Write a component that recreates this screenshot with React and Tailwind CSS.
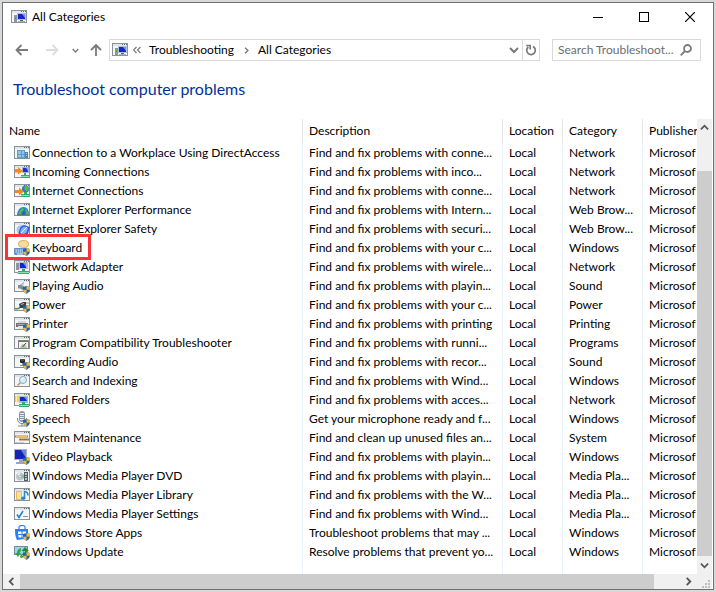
const rows = [
    { icon: 'building', name: 'Connection to a Workplace Using DirectAccess', description: 'Find and fix problems with conne...', category: 'Network' },
    { icon: 'incoming', name: 'Incoming Connections', description: 'Find and fix problems with inco...', category: 'Network' },
    { icon: 'internet', name: 'Internet Connections', description: 'Find and fix problems with conne...', category: 'Network' },
    { icon: 'performance', name: 'Internet Explorer Performance', description: 'Find and fix problems with Intern...', category: 'Web Brow...' },
    { icon: 'safety', name: 'Internet Explorer Safety', description: 'Find and fix problems with securi...', category: 'Web Brow...' },
    { icon: 'keyboard', name: 'Keyboard', description: 'Find and fix problems with your c...', category: 'Windows', highlighted: true },
    { icon: 'network', name: 'Network Adapter', description: 'Find and fix problems with wirele...', category: 'Network' },
    { icon: 'audio', name: 'Playing Audio', description: 'Find and fix problems with playin...', category: 'Sound' },
    { icon: 'power', name: 'Power', description: 'Find and fix problems with your c...', category: 'Power' },
    { icon: 'printer', name: 'Printer', description: 'Find and fix problems with printing', category: 'Printing' },
    { icon: 'program', name: 'Program Compatibility Troubleshooter', description: 'Find and fix problems with runni...', category: 'Programs' },
    { icon: 'recording', name: 'Recording Audio', description: 'Find and fix problems with recor...', category: 'Sound' },
    { icon: 'search', name: 'Search and Indexing', description: 'Find and fix problems with Wind...', category: 'Windows' },
    { icon: 'shared', name: 'Shared Folders', description: 'Find and fix problems with acces...', category: 'Network' },
    { icon: 'speech', name: 'Speech', description: 'Get your microphone ready and f...', category: 'Windows' },
    { icon: 'maintenance', name: 'System Maintenance', description: 'Find and clean up unused files an...', category: 'System' },
    { icon: 'video', name: 'Video Playback', description: 'Find and fix problems with playin...', category: 'Windows' },
    { icon: 'dvd', name: 'Windows Media Player DVD', description: 'Find and fix problems with playin...', category: 'Media Pla...' },
    { icon: 'library', name: 'Windows Media Player Library', description: 'Find and fix problems with the W...', category: 'Media Pla...' },
    { icon: 'settings', name: 'Windows Media Player Settings', description: 'Find and fix problems with Wind...', category: 'Media Pla...' },
    { icon: 'store', name: 'Windows Store Apps', description: 'Troubleshoot problems that may ...', category: 'Windows' },
    { icon: 'update', name: 'Windows Update', description: 'Resolve problems that prevent yo...', category: 'Windows' },
];

// Small window frame that most of the icons sit in
function Frame() {
    return (
        <g shapeRendering="crispEdges">
            <rect x="0" y="1" width="16" height="13" fill="#8b9298" />
            <rect x="1" y="2" width="14" height="2" fill="#dfe5ea" />
            <rect x="1" y="4" width="14" height="9" fill="#f3f5f6" />
            <rect x="10" y="2" width="1" height="1" fill="#5c6b7a" />
            <rect x="12" y="2" width="1" height="1" fill="#5c6b7a" />
            <rect x="14" y="2" width="1" height="1" fill="#5c6b7a" />
        </g>
    );
}

function Shield() {
    return (
        <g>
            <path d="M12.5 8 L16 9 V11.8 Q15.6 14.6 12.5 16 Q9.4 14.6 9 11.8 V9Z" fill="#1d66b4" />
            <path d="M12.5 8 L16 9 V11.8 H12.5Z" fill="#f3b92e" />
            <path d="M12.5 16 Q9.4 14.6 9 11.8 H12.5Z" fill="#f3b92e" />
        </g>
    );
}

function Monitor({ x = 6, y = 4 }) {
    return (
        <g>
            <rect x={x} y={y} width="9" height="7" fill="#b9c3d0" />
            <rect x={x + 1} y={y + 1} width="7" height="5" fill="#1526c9" />
            <path d={`M${x + 5} ${y + 1} h3 v4z`} fill="#6e95f2" />
            <rect x={x + 3} y={y + 7} width="3" height="1" fill="#59636f" />
            <rect x={x + 1} y={y + 8} width="7" height="1" fill="#a7b0bb" />
        </g>
    );
}

const glyphs = {
    troubleshoot: (
        <>
            <Frame />
            <Monitor x={6} y={4} />
            <rect x="3" y="6" width="3" height="7" fill="#8e98a2" />
            <rect x="4" y="8" width="1" height="2" fill="#28c229" />
        </>
    ),
    building: (
        <>
            <Frame />
            <rect x="3" y="5" width="8" height="8" fill="#5b9fc6" />
            <path d="M4 6h3v3H4zM8 6h2v3H8zM4 10h3v2H4zM8 10h2v2H8z" fill="#8cc8e8" />
            <rect x="11" y="7" width="3" height="6" fill="#4785ad" />
            <path d="M12 8h1v1h-1zM12 10h1v1h-1z" fill="#9cd1ea" />
        </>
    ),
    incoming: (
        <>
            <Frame />
            <rect x="8" y="3" width="7" height="6" fill="#aab6c6" />
            <rect x="9" y="4" width="5" height="4" fill="#1c2fd0" />
            <path d="M12 4h2v3z" fill="#7d9ff3" />
            <path d="M10 9h2v2h3v3H7v-3h3z" fill="#28b268" />
            <path d="M7 12.500h8" stroke="#86e0ae" />
            <path d="M1 5h3V3l5 4-5 3.500V8.500H1z" fill="#f28a20" />
        </>
    ),
    internet: (
        <>
            <Frame />
            <circle cx="11.500" cy="6" r="3.600" fill="#3476cc" />
            <path d="M10 4l3-1.500 2 3-2 3-2-1z" fill="#55b848" />
            <path d="M10 9h3v2h2v3H7v-3h3z" fill="#2eae68" />
            <path d="M7 12.500h8" stroke="#86e0ae" />
            <path d="M1 7h4V4.500l5 4-5 4V10H1z" fill="#f28a20" />
        </>
    ),
    performance: (
        <>
            <Frame />
            <path d="M3 13Q4 5 9.500 5t5.500 8z" fill="#2d86bd" />
            <path d="M4.500 12Q5.500 7 9 6l1 2-3 2v3z" fill="#5bb95a" />
            <path d="M11 6q3 2 3.500 7H12q1-3-1-7z" fill="#5bb95a" />
            <path d="M8 13l2-5 1 5z" fill="#2358ae" />
            <path d="M3 13h12" stroke="#547082" />
        </>
    ),
    safety: (
        <>
            <Frame />
            <path d="M2.500 9q0-5 6-5 3 0 4 1l-4 9H5q-2-2-2.500-5z" fill="#a9c6ef" />
            <path d="M10 4L16 6l-2 7-6 3-3.500-4 2-6z" fill="#2f62d6" />
            <path d="M10 5.500l4 1.500-1.500 4.500-4 2.500L6 11.500l1.500-4z" fill="#86aef4" />
            <path d="M7 12l6-6" stroke="#e4eeff" />
        </>
    ),
    keyboard: (
        <>
            <path d="M4 4q0-4 5.500-4T15 4q0 3.500-3.500 4L9 10V8Q4 7.500 4 4z" fill="#dcb569" />
            <path d="M5 4Q5 1 9.500 1T14 4q0 2.500-3 3L9.500 8V7Q5 7 5 4z" fill="#f5dba0" />
            <rect x="0" y="8" width="12" height="7" rx="1" fill="#5f92c9" />
            <path d="M1.500 10h9M1.500 12h9" stroke="#e4f1fc" strokeDasharray="1.500 .7" />
            <path d="M3 14h6" stroke="#e4f1fc" />
            <Shield />
        </>
    ),
    network: (
        <>
            <Frame />
            <rect x="2" y="4" width="3" height="7" fill="#8e98a2" />
            <rect x="3" y="6" width="1" height="1" fill="#28c229" />
            <rect x="5" y="3" width="9" height="7" fill="#b0bccb" />
            <rect x="6" y="4" width="6" height="5" fill="#1526c9" />
            <path d="M9 4h3v4z" fill="#6e95f2" />
            <path d="M8 10h3v2h4v3H4v-3h4z" fill="#2aaf72" />
            <path d="M4 13.500h11" stroke="#8be3b6" />
        </>
    ),
    audio: (
        <>
            <Frame />
            <path d="M4 7h2l4-3v9L6 10.500H4z" fill="#848b91" />
            <path d="M7 7l3-2.500v4z" fill="#d1d5d8" />
            <Shield />
        </>
    ),
    power: (
        <>
            <Frame />
            <path d="M1 11.500q4 1 5-1.500" stroke="#45914c" strokeWidth="1.500" fill="none" />
            <path d="M5 7l4-2h3v4l-2 2H6z" fill="#3c4143" />
            <path d="M7 7.500l3-1" stroke="#b7bec1" />
            <path d="M12 6h3" stroke="#b9933c" />
            <Shield />
        </>
    ),
    printer: (
        <>
            <Frame />
            <rect x="4" y="5" width="8" height="3" fill="#d5d9db" />
            <rect x="2" y="7" width="12" height="4" fill="#6b7174" />
            <path d="M3 8.500h10" stroke="#a5abad" />
            <rect x="4" y="10" width="5" height="3" fill="#e4e7e8" />
            <Shield />
        </>
    ),
    program: (
        <>
            <Frame />
            <rect x="4" y="5" width="11" height="9" fill="#7d8286" />
            <rect x="5" y="6" width="9" height="1" fill="#dd4a3b" />
            <rect x="5" y="7" width="9" height="6" fill="#f5f3e9" />
            <path d="M6 13q1-4 3.500-4T13 13z" fill="#b9c9b0" />
            <path d="M8.500 12l3.500-4" stroke="#3f4447" />
        </>
    ),
    recording: (
        <>
            <Frame />
            <rect x="6" y="5" width="5" height="4" rx="1" fill="#27292b" />
            <path d="M7 6h3" stroke="#686e72" />
            <path d="M8 9h1v2H8zM6 11h4v1H6z" fill="#8b9195" />
            <Shield />
        </>
    ),
    search: (
        <>
            <Frame />
            <path d="M6.500 9.500L3.500 12.500" stroke="#c09a62" strokeWidth="1.600" />
            <circle cx="9" cy="7" r="3.500" fill="#d4edfc" stroke="#91a7b7" />
            <path d="M7 6.500q1-2 3-1.500" stroke="#fff" fill="none" />
        </>
    ),
    shared: (
        <>
            <Frame />
            <path d="M1 4h4v6H1z" fill="#efd165" />
            <path d="M2 4h1v6H2z" fill="#fff0a9" />
            <rect x="5" y="4" width="9" height="7" fill="#b0bccb" />
            <rect x="6" y="5" width="7" height="4" fill="#1526c9" />
            <path d="M10 5h3v4z" fill="#6e95f2" />
            <path d="M8 10h3v2h4v3H5v-3h3z" fill="#2aaf72" />
            <path d="M5 13.500h10" stroke="#8be3b6" />
        </>
    ),
    speech: (
        <>
            <rect x="5" y="0" width="6" height="11" rx="3" fill="#8999ac" />
            <path d="M6 2.500h4M6 4.500h4M6 6.500h4M6 8.500h4" stroke="#e4ebf2" />
            <path d="M3.500 7q0 5.500 4.500 5.500T12.500 7M8 12v3M4 15h7" stroke="#7485a0" fill="none" />
            <Shield />
        </>
    ),
    maintenance: (
        <>
            <Frame />
            <path d="M1 6.500h13M5 9.500h10" stroke="#b0822f" strokeWidth="2" />
            <path d="M2 6.500h11" stroke="#e9c26a" />
            <path d="M6 9.500h8" stroke="#8a6420" strokeDasharray="1 1" />
            <path d="M1 12.500h9" stroke="#c9ced2" />
        </>
    ),
    video: (
        <>
            <path d="M0 0h13v11H0z" fill="#a8b2c4" />
            <path d="M1 1h11v9H1z" fill="#1423b9" />
            <path d="M7 1h5v8z" fill="#6485e8" />
            <path d="M5 11h4v2H5zM2 13h9v2H2z" fill="#9ca7b4" />
            <Shield />
        </>
    ),
    dvd: (
        <>
            <Frame />
            <circle cx="6" cy="8.500" r="4" fill="#bfc5c9" />
            <path d="M6 8.500l4-2v4z" fill="#74c885" />
            <path d="M6 8.500L3 6l3-1.300z" fill="#eef1f2" />
            <circle cx="6" cy="8.500" r="1.200" fill="#fff" stroke="#81898e" strokeWidth=".5" />
            <rect x="10" y="4" width="4" height="9" fill="#535c66" />
            <path d="M11 5h2v2h-2zM11 8h2v1h-2zM11 10h2v2h-2z" fill="#a9cbe2" />
        </>
    ),
    library: (
        <>
            <Frame />
            <rect x="2" y="4" width="6" height="9" fill="#e6bd57" />
            <rect x="3" y="5" width="4" height="7" fill="#f9e39c" />
            <path d="M10.500 11V4.500q3.500.5 3.500 4" stroke="#258ad9" strokeWidth="1.600" fill="none" />
            <ellipse cx="9.200" cy="11.300" rx="2.200" ry="1.700" fill="#258ad9" />
        </>
    ),
    settings: (
        <>
            <Frame />
            <path d="M3 8.500l2 3L9 5" stroke="#2480c7" strokeWidth="1.600" fill="none" />
            <path d="M9 10.500h5" stroke="#8b9298" />
        </>
    ),
    store: (
        <>
            <path d="M5 4V2q0-1.500 3-1.500T11 2v2" stroke="#2a7ff0" strokeWidth="1.200" fill="none" />
            <path d="M1 4h13v9.500L3 15q-2-3-2-11z" fill="#2a7ff0" />
            <path d="M4 6.500h3.500v2.500H4zM8.500 6.500H12v2.500H8.500zM4.200 10h3.300v2.500H4.600zM8.500 10H12v2.500H8.500z" fill="#fff" />
            <Shield />
        </>
    ),
    update: (
        <>
            <path d="M0 2h14v9H0z" fill="#6f8d9e" />
            <path d="M1 3h12v7H1z" fill="#9ed6ef" />
            <path d="M4 13L1 9h2q0-4 4-5 0 4-1.500 5H7z" fill="#30a44b" />
            <path d="M11 3l4 4h-2q-1 6-6 7-1-1-1-2 3-1 3.500-5H7.500z" fill="#238a3b" />
            <path d="M10.500 7q0 4-3 5.500" stroke="#8fdc8f" fill="none" />
            <Shield />
        </>
    ),
};

function ItemIcon({ name }) {
    return (
        <svg viewBox="0 0 16 16" className="size-4 shrink-0" aria-hidden="true">
            {glyphs[name]}
        </svg>
    );
}

function Chevron({ d, className }) {
    return (
        <svg viewBox="0 0 10 10" className={className} fill="none" stroke="currentColor" strokeWidth="2" aria-hidden="true">
            <path d={d} />
        </svg>
    );
}

function TitleBar() {
    return (
        <header className="flex h-7 items-center justify-between pl-2">
            <div className="flex items-center gap-[5px]">
                <ItemIcon name="troubleshoot" />
                <h1>All Categories</h1>
            </div>
            <div className="flex h-full text-black">
                <button type="button" aria-label="Minimize" className="flex w-[46px] items-center justify-center">
                    <svg viewBox="0 0 10 10" className="size-[10px]" stroke="currentColor">
                        <path d="M0 5.500h10" />
                    </svg>
                </button>
                <button type="button" aria-label="Maximize" className="flex w-[46px] items-center justify-center">
                    <svg viewBox="0 0 10 10" className="size-[10px]" fill="none" stroke="currentColor">
                        <rect x=".5" y=".5" width="9" height="9" />
                    </svg>
                </button>
                <button type="button" aria-label="Close" className="flex w-[46px] items-center justify-center">
                    <svg viewBox="0 0 10 10" className="size-[10px]" stroke="currentColor" strokeWidth="1.200">
                        <path d="M0 0l10 10M10 0L0 10" />
                    </svg>
                </button>
            </div>
        </header>
    );
}

function AddressBar() {
    return (
        <div className="mt-2 flex h-[22px] items-stretch px-3 text-[#7a7a7a]">
            <nav aria-label="History" className="flex w-[94px] items-center">
                <button type="button" aria-label="Back" className="flex w-[14px] justify-center">
                    <svg viewBox="0 0 14 12" className="h-3 w-[14px]" fill="none" stroke="currentColor" strokeWidth="1.800">
                        <path d="M13 6H2M6.500 1L1.500 6l5 5" />
                    </svg>
                </button>
                <button type="button" aria-label="Forward" className="ml-4 flex w-[14px] justify-center text-[#dcdcdc]">
                    <svg viewBox="0 0 14 12" className="h-3 w-[14px]" fill="none" stroke="currentColor" strokeWidth="1.800">
                        <path d="M1 6h11M7.500 1l5 5-5 5" />
                    </svg>
                </button>
                <button type="button" aria-label="Recent locations" className="ml-3 flex w-2 justify-center">
                    <Chevron d="M1 3l4 4 4-4" className="size-[7px]" />
                </button>
                <button type="button" aria-label="Up" className="ml-[11px] flex w-3 justify-center">
                    <svg viewBox="0 0 12 12" className="size-3" fill="none" stroke="currentColor" strokeWidth="1.800">
                        <path d="M6 12V1.500M1 6l5-5 5 5" />
                    </svg>
                </button>
            </nav>

            <div className="flex min-w-0 flex-1 items-center border border-[#d9d9d9] pl-0.5">
                <ItemIcon name="troubleshoot" />
                <svg viewBox="0 0 8 8" className="ml-[5px] size-2 shrink-0" fill="none" stroke="currentColor" strokeWidth="1.200" aria-hidden="true">
                    <path d="M3.500 1l-3 3 3 3M7.500 1l-3 3 3 3" />
                </svg>
                <a href="#troubleshooting" className="ml-2 whitespace-nowrap text-black">Troubleshooting</a>
                <Chevron d="M3 1l4 4-4 4" className="mr-2 ml-[9px] size-[7px] shrink-0" />
                <a href="#all" className="whitespace-nowrap text-black">All Categories</a>
                <button type="button" aria-label="Previous locations" className="mr-[3px] ml-auto">
                    <Chevron d="M1 3l4 4 4-4" className="size-[10px]" />
                </button>
                <button type="button" aria-label="Refresh" className="flex w-[17px] items-center justify-center self-stretch border-l border-[#d9d9d9]">
                    <svg viewBox="0 0 12 12" className="size-3" fill="none" stroke="currentColor" strokeWidth="1.700" aria-hidden="true">
                        <path d="M8 2.500A4.300 4.300 0 1 1 3.300 3M1.200 1.500h4v4" />
                    </svg>
                </button>
            </div>

            <label className="ml-3 flex w-[149px] items-center border border-[#d9d9d9] pr-2 pl-[5px]">
                <input
                    type="text"
                    aria-label="Search Troubleshooting"
                    placeholder="Search Troubleshoot..."
                    className="min-w-0 flex-1 outline-none placeholder:text-[#6d6d6d]"
                />
                <svg viewBox="0 0 12 12" className="size-3 shrink-0" fill="none" stroke="currentColor" strokeWidth="1.800" aria-hidden="true">
                    <circle cx="7.500" cy="4.500" r="3.500" />
                    <path d="M5 7L.7 11.300" />
                </svg>
            </label>
        </div>
    );
}

function CategoryTable() {
    return (
        <table className="w-full table-fixed border-separate border-spacing-0 text-left whitespace-nowrap text-black">
            <colgroup>
                <col className="w-[300px]" />
                <col />
                <col className="w-[60px]" />
                <col className="w-20" />
                <col className="w-[54px]" />
            </colgroup>
            <thead>
                <tr className="h-6">
                    <th scope="col" className="border-r border-[#e5e5e5] p-0 pl-1.5 font-normal">Name</th>
                    <th scope="col" className="border-r border-[#e5e5e5] p-0 pl-1.5 font-normal">Description</th>
                    <th scope="col" className="border-r border-[#e5e5e5] p-0 pl-1.5 font-normal">Location</th>
                    <th scope="col" className="border-r border-[#e5e5e5] p-0 pl-1.5 font-normal">Category</th>
                    <th scope="col" className="overflow-hidden p-0 pl-1.5 font-normal">Publisher</th>
                </tr>
            </thead>
            <tbody>
                {rows.map((row) => (
                    <tr key={row.name} className="h-[19px]">
                        <td className="border-r border-[#e9f1fb] p-0 pl-[11px]">
                            <div className="relative flex items-center gap-0.5">
                                <ItemIcon name={row.icon} />
                                <span>{row.name}</span>
                                {row.highlighted && (
                                    <div className="pointer-events-none absolute -top-1.5 -left-[9px] h-[26px] w-[86px] border-3 border-[#fa3338]" />
                                )}
                            </div>
                        </td>
                        <td className="overflow-hidden border-r border-[#e9f1fb] p-0 pl-1.5">{row.description}</td>
                        <td className="overflow-hidden border-r border-[#e9f1fb] p-0 pl-1.5">Local</td>
                        <td className="overflow-hidden border-r border-[#e9f1fb] p-0 pl-1.5">{row.category}</td>
                        <td className="overflow-hidden p-0 pl-1.5">Microsof</td>
                    </tr>
                ))}
                <tr className="h-[13px]" aria-hidden="true">
                    <td className="border-r border-[#e9f1fb]" />
                    <td className="border-r border-[#e9f1fb]" />
                    <td className="border-r border-[#e9f1fb]" />
                    <td className="border-r border-[#e9f1fb]" />
                    <td />
                </tr>
            </tbody>
        </table>
    );
}

function VerticalScrollbar() {
    return (
        <div className="flex w-[15px] shrink-0 flex-col bg-[#f0f0f0] text-[#555]">
            <button type="button" aria-label="Scroll up" className="flex h-[17px] items-center justify-center">
                <Chevron d="M1 7l4-4 4 4" className="size-[9px]" />
            </button>
            <div className="mt-[35px] flex-1 bg-[#cdcdcd]" />
            <button type="button" aria-label="Scroll down" className="flex h-[18px] items-center justify-center">
                <Chevron d="M1 3l4 4 4-4" className="size-[9px]" />
            </button>
        </div>
    );
}

function HorizontalScrollbar() {
    return (
        <div className="mr-px flex h-[15px] bg-[#f0f0f0] text-[#555]">
            <button type="button" aria-label="Scroll left" className="flex w-[17px] items-center justify-center">
                <Chevron d="M7 1L3 5l4 4" className="size-[9px]" />
            </button>
            <div className="flex-1 bg-[#cdcdcd]" />
            <button type="button" aria-label="Scroll right" className="ml-[26px] flex w-[17px] items-center justify-center">
                <Chevron d="M3 1l4 4-4 4" className="size-[9px]" />
            </button>
            <svg viewBox="0 0 15 15" className="size-[15px]" fill="#bfbfbf" shapeRendering="crispEdges" aria-hidden="true">
                <path d="M11 6h2v2h-2zM8 9h2v2H8zM11 9h2v2h-2zM5 12h2v2H5zM8 12h2v2H8zM11 12h2v2h-2z" />
            </svg>
        </div>
    );
}

export default function App() {
    return (
        <div className="min-h-screen bg-[#d8d8d8] px-0.5 pt-0.5 pb-px font-['Lato','Open_Sans',sans-serif] text-xs text-black">
            <main className="border border-[#707070] bg-white">
                <TitleBar />
                <AddressBar />
                <h2 className="mt-4 mb-[18px] pl-[10px] text-base leading-6 text-[#003399]">Troubleshoot computer problems</h2>
                <div className="mr-px flex">
                    <div className="min-w-0 flex-1 overflow-hidden">
                        <CategoryTable />
                    </div>
                    <VerticalScrollbar />
                </div>
                <HorizontalScrollbar />
            </main>
        </div>
    );
}
